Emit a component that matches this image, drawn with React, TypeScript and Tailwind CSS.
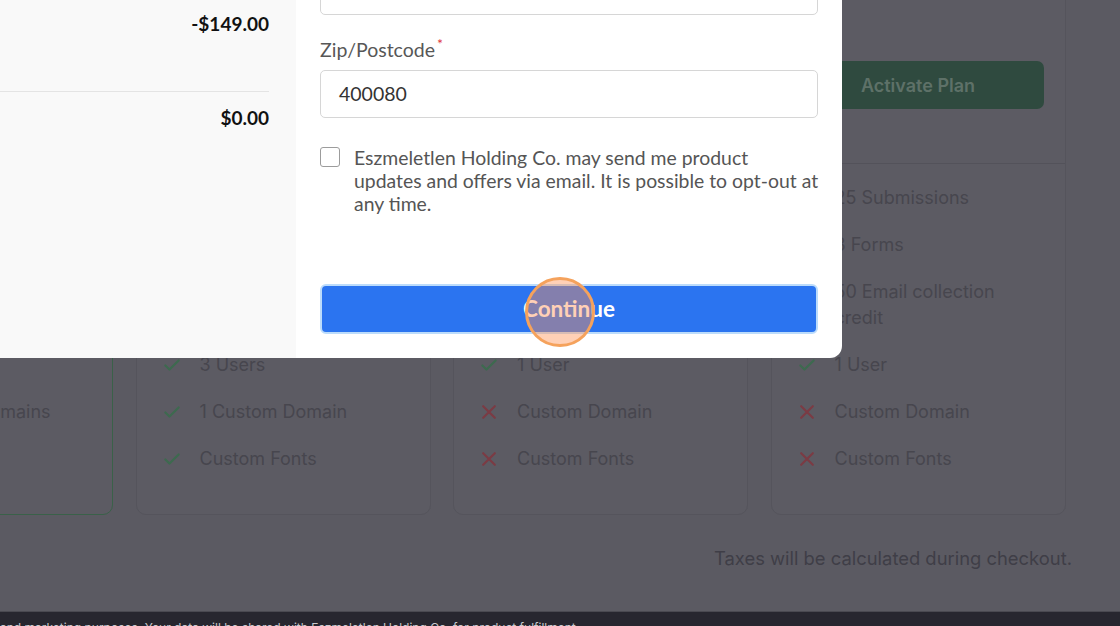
import React from "react";

type Feature = { text: string; ok: boolean };

const Check = () => (
  <svg width="20" height="20" viewBox="0 0 24 24" fill="none" stroke="#3d6a4f" strokeWidth="2.6" strokeLinecap="round" strokeLinejoin="round">
    <path d="M4 12.5l5 5L20 6.5" />
  </svg>
);

const Cross = () => (
  <svg width="20" height="20" viewBox="0 0 24 24" fill="none" stroke="#7b3b44" strokeWidth="2.6" strokeLinecap="round" strokeLinejoin="round">
    <path d="M5 5l14 14M19 5L5 19" />
  </svg>
);

const cards: { highlighted?: boolean; features: Feature[] }[] = [
  {
    highlighted: true,
    features: [
      { text: "Unlimited Submissions", ok: true },
      { text: "Unlimited Forms", ok: true },
      { text: "5000 Email collection credit", ok: true },
      { text: "10 Users", ok: true },
      { text: "10 Custom Domains", ok: true },
      { text: "Custom Fonts", ok: true },
    ],
  },
  {
    features: [
      { text: "1000 Submissions", ok: true },
      { text: "10 Forms", ok: true },
      { text: "500 Email collection credit", ok: true },
      { text: "3 Users", ok: true },
      { text: "1 Custom Domain", ok: true },
      { text: "Custom Fonts", ok: true },
    ],
  },
  {
    features: [
      { text: "100 Submissions", ok: true },
      { text: "5 Forms", ok: true },
      { text: "100 Email collection credit", ok: true },
      { text: "1 User", ok: true },
      { text: "Custom Domain", ok: false },
      { text: "Custom Fonts", ok: false },
    ],
  },
  {
    features: [
      { text: "25 Submissions", ok: true },
      { text: "3 Forms", ok: true },
      { text: "50 Email collection credit", ok: true },
      { text: "1 User", ok: true },
      { text: "Custom Domain", ok: false },
      { text: "Custom Fonts", ok: false },
    ],
  },
];

export default function App() {
  return (
    <div
      className="relative w-[1120px] h-[626px] overflow-hidden bg-[#5b5a62]"
      style={{ fontFamily: "Inter, 'Liberation Sans', sans-serif" }}
    >
      {/* Underlying page (dimmed) */}
      <div className="flex flex-col h-[611px]">
        <div className="flex gap-[22.5px] ml-[-182px] mt-[-200px]">
          {cards.map((c, i) => (
            <div
              key={i}
              className={
                "w-[295px] shrink-0 rounded-[10px] bg-[#5c5b63] " +
                (c.highlighted ? "border border-[#3a6149]" : "border border-[#55545c]")
              }
            >
              <div className="h-[363px] flex flex-col justify-end px-[21px] pb-[54px] border-b border-[#53525a]">
                <div className="h-[48px] rounded-[7px] bg-[#2f4a3f] flex items-center justify-center text-[18px] font-semibold text-[#5e7168]">
                  Activate Plan
                </div>
              </div>
              <div className="flex flex-col gap-[21px] pt-[21px] pb-[42px] pl-[25px] pr-[21px]">
                {c.features.map((f, j) => (
                  <div key={j} className="flex items-start">
                    <div className="w-[38px] h-[26px] flex items-center shrink-0">
                      {f.ok ? <Check /> : <Cross />}
                    </div>
                    <div className="text-[18px] leading-[26px] text-[#47464e]">{f.text}</div>
                  </div>
                ))}
              </div>
            </div>
          ))}
        </div>
        <div className="flex justify-end pr-[48px] mt-[30px]">
          <div className="text-[18.4px] leading-[26px] text-[#3f3e47]">Taxes will be calculated during checkout.</div>
        </div>
      </div>
      <div className="h-[15px] bg-[#27262f] border-t border-[#4a4951] overflow-hidden">
        <div className="pt-[9px] text-[12px] leading-[14px] text-[#c9c9ce] whitespace-nowrap">
          and marketing purposes. Your data will be shared with Eszmeletlen Holding Co. for product fulfillment.
        </div>
      </div>

      {/* Modal */}
      <div
        className="absolute left-0 top-0 h-[358px] w-[842px] flex rounded-br-[12px] overflow-hidden bg-white"
        style={{ fontFamily: "Lato, 'Liberation Sans', sans-serif" }}
      >
        <div className="w-[296px] shrink-0 bg-[#f9f9f9] pr-[27px] flex flex-col">
          <div className="mt-[12px] h-[24px] leading-[24px] text-right text-[19px] font-bold text-[#111]">-$149.00</div>
          <div className="mt-[55px] h-px bg-[#e4e4e4]" />
          <div className="mt-[14px] h-[24px] leading-[24px] text-right text-[19px] font-bold text-[#111]">$0.00</div>
        </div>
        <div className="flex-1 px-[24px] flex flex-col">
          <div className="mt-[-33px] h-[48px] rounded-[5px] border border-[#d6d6d6]" />
          <div className="mt-[23px] h-[24px] leading-[24px] text-[19.5px] text-[#575757]">
            Zip/Postcode<span className="relative top-[-8px] ml-[2px] text-[14px] text-[#e0353f]">*</span>
          </div>
          <div className="mt-[8px] h-[48px] rounded-[5px] border border-[#d6d6d6] flex items-center px-[18px] text-[19.5px] text-[#333]">
            400080
          </div>
          <div className="mt-[28px] flex items-start">
            <div className="mt-[1px] w-[20px] h-[20px] rounded-[3px] border-[1.5px] border-[#9c9c9c] bg-white shrink-0" />
            <div className="flex-1 ml-[14px] mr-[-8px] text-[19.4px] leading-[23px] text-[#555] whitespace-nowrap">
              Eszmeletlen Holding Co. may send me product
              <br />
              updates and offers via email. It is possible to opt-out at
              <br />
              any time.
            </div>
          </div>
          <div className="flex-1" />
          <div className="mb-[24px] h-[50px] rounded-[6px] border-[2px] border-[#bcdcfb] bg-[#2b74f0] flex items-center justify-center text-[22.5px] font-bold text-white">
            Continue
          </div>
        </div>
      </div>

      {/* Click indicator */}
      <div className="absolute left-[525px] top-[277px] w-[70px] h-[70px] rounded-full border-[3px] border-[#f5a25c] bg-[rgba(255,143,80,0.42)]" />
    </div>
  );
}
